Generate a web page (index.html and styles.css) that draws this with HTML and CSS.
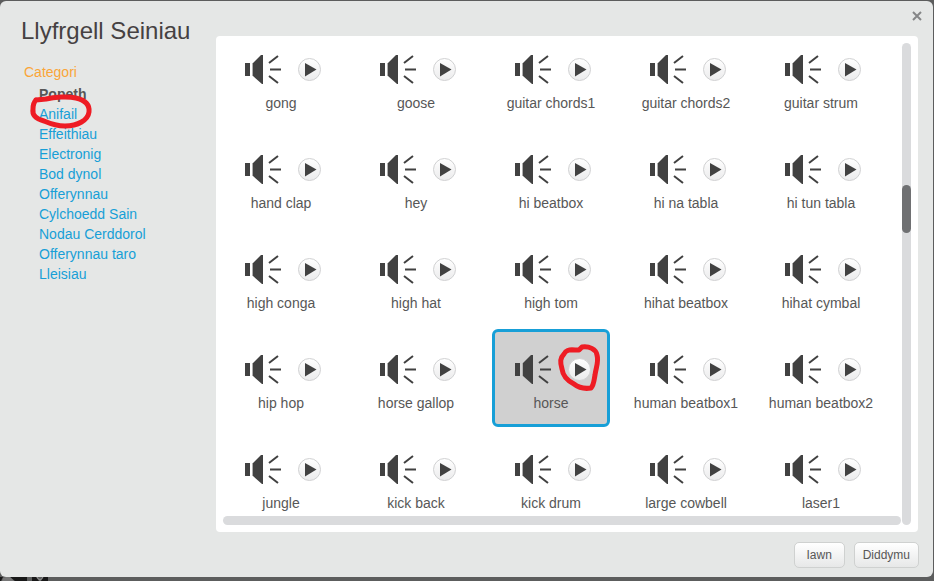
FILE: index.html
```html
<!DOCTYPE html>
<html lang="cy">
<head>
<meta charset="utf-8">
<title>Llyfrgell Seiniau</title>
<link rel="stylesheet" href="styles.css">
<script src="library.js" defer></script>
</head>
<body>
<main class="dialog">
  <aside class="sidebar">
    <h1>Llyfrgell Seiniau</h1>
    <h2>Categori</h2>
    <nav>
      <ul class="categories">
        <li><a class="current" href="#popeth">Popeth</a></li>
        <li class="marked"><a href="#anifail">Anifail</a>
          <svg class="ring" viewBox="0 0 66 38" aria-hidden="true"><path d="M8 7L18 6C26 4 40 3 48 5C56 7 62 11 61 19C60 27 50 33 37 33C29 33 23 31 16 28C8 26 4 22 5 16C5 12 6 9 8 7"/></svg></li>
        <li><a href="#effeithiau">Effeithiau</a></li>
        <li><a href="#electronig">Electronig</a></li>
        <li><a href="#bod-dynol">Bod dynol</a></li>
        <li><a href="#offerynnau">Offerynnau</a></li>
        <li><a href="#cylchoedd-sain">Cylchoedd Sain</a></li>
        <li><a href="#nodau-cerddorol">Nodau Cerddorol</a></li>
        <li><a href="#offerynnau-taro">Offerynnau taro</a></li>
        <li><a href="#lleisiau">Lleisiau</a></li>
      </ul>
    </nav>
  </aside>
  <section class="library">
    <div class="panel">
      <div class="viewport"><ul class="sounds" id="sounds"></ul></div>
      <div class="track-y"><div class="thumb"></div></div>
      <div class="track-x"></div>
    </div>
    <footer class="actions">
      <button type="button">Iawn</button>
      <button type="button">Diddymu</button>
    </footer>
  </section>
  <button class="close" type="button" aria-label="Cau"><svg viewBox="0 0 10 10"><path d="M1 1L9 9M9 1L1 9"/></svg></button>
</main>
<svg class="backdrop" viewBox="0 0 52 4" aria-hidden="true"><path fill="#181818" d="M0 0H3L1 4H0zM10 0H27V4H15zM32 0H36L39 4H32zM43 0H48V4H41z"/><path fill="#777" d="M3 1L6 0H10L14 4H2z"/><path fill="none" stroke="#999" d="M37 0Q40 6 43 0"/></svg>
<svg width="0" height="0" class="defs" aria-hidden="true">
  <defs>
    <linearGradient id="face" x1="0" y1="0" x2="0" y2="1"><stop offset="0" stop-color="#fff"/><stop offset="1" stop-color="#ebebec"/></linearGradient>
    <symbol id="speaker" viewBox="0 0 38 31">
      <path fill="#414141" d="M1 9H6V22H1zM9 9L17 1H19V30H18L9 22z"/>
      <path fill="none" stroke="#b0b0b0" d="M8.500 9V22"/>
      <path fill="none" stroke="#414141" stroke-width="2" d="M25 9L34 2M26 15.500H37M25 22L34 29"/>
    </symbol>
    <symbol id="play" viewBox="0 0 23 23">
      <circle cx="11.500" cy="11.500" r="11" fill="url(#face)" stroke="#d0d1d2"/>
      <path fill="#414141" d="M7 5L18.500 11.500L7 18.500z"/>
    </symbol>
  </defs>
</svg>
</body>
</html>
```
FILE: styles.css
```css
* {
  box-sizing: border-box;
}

body {
  position: relative;
  min-height: 100vh;
  margin: 0;
  padding: 1px 1px 4px 0;
  display: flex;
  background: #5c5d5d;
  color: #575757;
  font: 14px/20px "Liberation Sans", Arial, sans-serif;
}

ul {
  list-style: none;
  margin: 0;
  padding: 0;
}

.dialog {
  position: relative;
  flex: 1;
  display: flex;
  background: #e5e7e6;
  border-radius: 6px;
}

.sidebar {
  flex: 0 0 216px;
  padding: 14px 0 0 21px;
}

h1 {
  margin: 0 0 15px;
  color: #454142;
  font-size: 24px;
  font-weight: normal;
  line-height: 32px;
}

h2 {
  margin: 0 0 2px 3px;
  color: #faa538;
  font-size: 14px;
  font-weight: normal;
  line-height: 20px;
}

.categories {
  padding-left: 18px;
}

.categories a {
  color: #179fd7;
  text-decoration: none;
}

.categories .current {
  color: #575757;
  font-weight: bold;
}

.marked {
  position: relative;
}

.ring {
  position: absolute;
  z-index: 1;
  fill: none;
  stroke: #ee1c24;
  stroke-width: 5;
  stroke-linecap: round;
  stroke-linejoin: round;
  pointer-events: none;
}

.marked .ring {
  left: -11px;
  top: -11px;
  width: 66px;
  height: 38px;
}

.library {
  flex: 1;
  min-width: 0;
  display: flex;
  flex-direction: column;
  padding: 35px 15px 9px 0;
}

.panel {
  flex: 1;
  display: grid;
  grid-template-columns: 1fr 9px;
  grid-template-rows: 1fr 9px;
  padding: 7px 7px 7px 6px;
  background: #fff;
  border-radius: 4px;
}

.viewport {
  overflow: hidden;
}

.sounds {
  display: grid;
  grid-template-columns: repeat(5, 1fr);
  gap: 2px 17px;
  margin: -14px 22px -11px 0;
}

.sound {
  position: relative;
  height: 98px;
  padding-top: 22px;
  border: 3px solid transparent;
  border-radius: 6px;
  text-align: center;
}

.sound.selected {
  background: #d0d0d0;
  border-color: #179fd7;
}

.icons {
  display: flex;
  justify-content: center;
  align-items: center;
  gap: 16px;
  height: 31px;
  margin-bottom: 8px;
  padding-left: 3px;
}

.speaker {
  width: 38px;
  height: 31px;
}

.play {
  width: 23px;
  height: 23px;
  padding: 0;
  border: 0;
  background: none;
}

.play svg {
  display: block;
  width: 23px;
  height: 23px;
}

.name {
  display: block;
  white-space: nowrap;
}

.sound .ring {
  left: 62px;
  top: 11px;
  width: 44px;
  height: 50px;
}

.track-y {
  grid-column: 2;
  grid-row: 1 / 3;
  padding-top: 142px;
  background: #dadbdd;
  border-radius: 5px;
}

.thumb {
  height: 48px;
  background: #6f7072;
  border-radius: 5px;
}

.track-x {
  grid-column: 1;
  grid-row: 2;
  margin: 0 1px;
  background: #dadbdd;
  border-radius: 5px;
}

.actions {
  display: flex;
  justify-content: flex-end;
  gap: 9px;
  margin: 10px -1px 0 0;
}

.actions button {
  min-width: 51px;
  height: 26px;
  padding: 0 8px;
  border: 1px solid #cfd1d0;
  border-radius: 5px;
  background: linear-gradient(#fff, #e7e8e8);
  color: #575757;
  font: 12px/24px "Liberation Sans", Arial, sans-serif;
}

.close {
  position: absolute;
  top: 8px;
  right: 9px;
  width: 14px;
  height: 14px;
  padding: 2px;
  border: 0;
  background: none;
}

.close svg {
  display: block;
  fill: none;
  stroke: #858687;
  stroke-width: 2;
}

.backdrop {
  position: absolute;
  left: 0;
  bottom: 0;
  width: 52px;
  height: 4px;
}

.defs {
  position: absolute;
}
```
FILE: library.js
```js
const names = [
  "gong", "goose", "guitar chords1", "guitar chords2", "guitar strum",
  "hand clap", "hey", "hi beatbox", "hi na tabla", "hi tun tabla",
  "high conga", "high hat", "high tom", "hihat beatbox", "hihat cymbal",
  "hip hop", "horse gallop", "horse", "human beatbox1", "human beatbox2",
  "jungle", "kick back", "kick drum", "large cowbell", "laser1"
];

const ring = '<svg class="ring" viewBox="0 0 44 50" aria-hidden="true"><path d="M18 7C12 6 8 8 7 11C3 15 3 19 5 26C6 34 11 38 17 41C22 45 28 46 34 45C37 42 37 37 38 32C39 24 42 19 40 12C39 6 32 3 25 4L22 7L14 7"/></svg>';

document.getElementById("sounds").innerHTML = names.map(name => {
  const selected = name === "horse";
  return `<li class="sound${selected ? " selected" : ""}">
    <div class="icons">
      <svg class="speaker" aria-hidden="true"><use href="#speaker"/></svg>
      <button class="play" type="button" aria-label="${name}"><svg><use href="#play"/></svg></button>
    </div>
    <span class="name">${name}</span>${selected ? ring : ""}
  </li>`;
}).join("");
```
